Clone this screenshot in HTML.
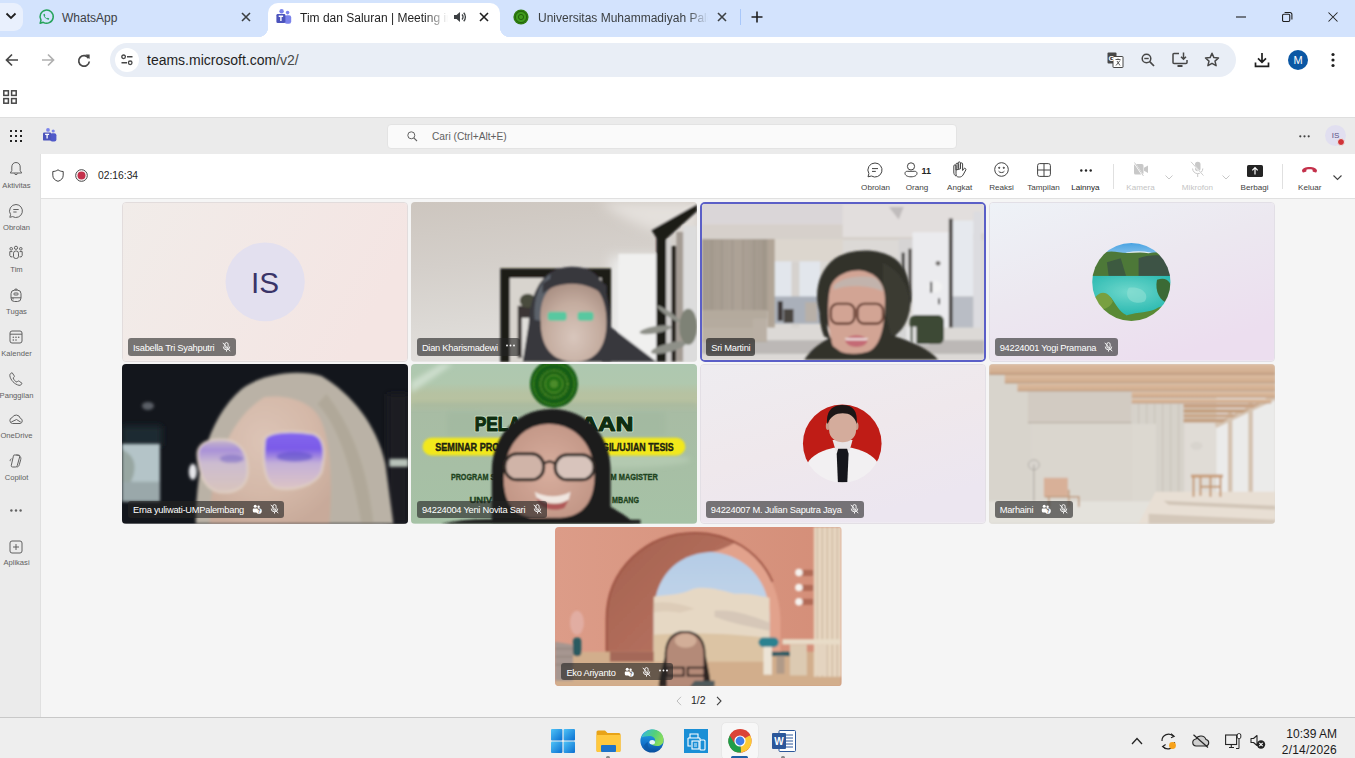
<!DOCTYPE html>
<html><head><meta charset="utf-8">
<style>
*{box-sizing:border-box;margin:0;padding:0}
html,body{width:1355px;height:758px;overflow:hidden;background:#fff;font-family:"Liberation Sans",sans-serif;position:relative}
.abs{position:absolute}
svg{position:absolute;overflow:visible}
#tabstrip{left:0;top:0;width:1355px;height:37px;background:#d3e3fd}
#toolbar{left:0;top:37px;width:1355px;height:44px;background:#fff;border-top-right-radius:9px}
#bookmarks{left:0;top:81px;width:1355px;height:36px;background:#fff}
#teamshdr{left:0;top:117px;width:1355px;height:37px;background:#ebebeb;border-top:1px solid #dedede}
#rail{left:0;top:154px;width:41px;height:563px;background:#ebebeb;border-right:1px solid #e0e0e0}
#mhdr{left:41px;top:154px;width:1314px;height:45px;background:#fff;border-bottom:1px solid #e0e0e0}
#stage{left:41px;top:199px;width:1314px;height:518px;background:#f5f5f5}
#taskbar{left:0;top:717px;width:1355px;height:41px;background:#eeeeee;border-top:1px solid #c8c8c8}
.tabtxt{font-size:13px;color:#1f1f1f;white-space:nowrap}
.rl{font-size:7.6px;color:#616161;text-align:center;width:41px;left:0}
.tl{font-size:8.1px;color:#424242;text-align:center;width:60px}
.tile{position:absolute;width:286.3px;height:159.7px;border-radius:4px;overflow:hidden}
.lbl{position:absolute;left:5px;bottom:5px;height:17.5px;border-radius:3px;color:#fff;font-size:9.3px;letter-spacing:-.25px;line-height:18px;padding:0 5px;white-space:nowrap;display:flex;align-items:center}
.lbl .ic{margin-left:8px;display:inline-flex;align-items:center}
.lbl .mi{position:static}
.lbl .lt{position:relative;top:.8px}
</style></head><body>
<div id="tabstrip" class="abs">
 <div class="abs" style="left:-10px;top:3px;width:33px;height:28px;border-radius:9px;background:#e9f0fd"></div>
 <svg style="left:5px;top:12px" width="12" height="8" viewBox="0 0 12 8"><path d="M1.5 1.5 L6 6 L10.5 1.5" fill="none" stroke="#1f1f1f" stroke-width="1.8"/></svg>
 <svg style="left:38px;top:9px" width="16" height="16" viewBox="0 0 16 16"><path d="M2.2 14.2 L3 11.1 A6.6 6.6 0 1 1 5.2 13.3 Z" fill="none" stroke="#25a35a" stroke-width="1.5" stroke-linejoin="round"/><path d="M5.6 4.9 C5.3 5.6 5.6 7.4 7.3 9 C8.9 10.5 10.3 10.9 11 10.6 L11.2 9.6 L9.7 8.8 L9 9.5 C8.2 9.1 7 8 6.6 7.1 L7.3 6.4 L6.6 4.8 Z" fill="#25a35a"/></svg>
 <div class="abs tabtxt" style="left:62px;top:11px;font-size:12px;color:#3c4043">WhatsApp</div>
 <svg style="left:241px;top:12px" width="10" height="10" viewBox="0 0 10 10"><path d="M1 1 L9 9 M9 1 L1 9" stroke="#3c4043" stroke-width="1.6"/></svg>
 <div class="abs" style="left:268px;top:3px;width:232px;height:34px;background:#fff;border-radius:10px 10px 0 0"></div>
 <div class="abs" style="left:258px;top:27px;width:10px;height:10px;background:radial-gradient(circle at 0 0,#d3e3fd 10px,#fff 10.5px)"></div>
 <div class="abs" style="left:500px;top:27px;width:10px;height:10px;background:radial-gradient(circle at 100% 0,#d3e3fd 10px,#fff 10.5px)"></div>
 <svg style="left:276px;top:9px" width="16" height="16" viewBox="0 0 16 16"><circle cx="5.6" cy="2.3" r="2.2" fill="#7b83eb"/><circle cx="11.6" cy="3.6" r="1.8" fill="#7b83eb"/><rect x="8.6" y="6.2" width="6.6" height="8.6" rx="2.2" fill="#7b83eb"/><rect x="0.4" y="5" width="9" height="9" rx="1.3" fill="#4b53bc"/><path d="M2.7 7.2 H7.1 M4.9 7.2 V12" stroke="#fff" stroke-width="1.4"/></svg>
 <div class="abs tabtxt" style="left:300px;top:11px;font-size:12px;width:148px;overflow:hidden;-webkit-mask-image:linear-gradient(90deg,#000 125px,transparent 148px)">Tim dan Saluran | Meeting in Tim</div>
 <svg style="left:453px;top:10px" width="14" height="14" viewBox="0 0 14 14"><path d="M1 5 H3.5 L7 2 V12 L3.5 9 H1 Z" fill="#3c4043"/><path d="M9 4.5 A3.5 3.5 0 0 1 9 9.5 M10.7 2.8 A6 6 0 0 1 10.7 11.2" fill="none" stroke="#3c4043" stroke-width="1.3"/></svg>
 <svg style="left:479px;top:12px" width="10" height="10" viewBox="0 0 10 10"><path d="M1 1 L9 9 M9 1 L1 9" stroke="#1f1f1f" stroke-width="1.6"/></svg>
 <svg style="left:513px;top:9px" width="16" height="16" viewBox="0 0 16 16"><circle cx="8" cy="8" r="7.6" fill="#2f7d12"/><circle cx="8" cy="8" r="5.6" fill="#3f9a1c" stroke="#1f5c08" stroke-width="0.8"/><circle cx="8" cy="8" r="2.6" fill="none" stroke="#1f5c08" stroke-width="0.9"/></svg>
 <div class="abs tabtxt" style="left:538px;top:11px;font-size:12px;color:#3c4043;width:170px;overflow:hidden;-webkit-mask-image:linear-gradient(90deg,#000 150px,transparent 170px)">Universitas Muhammadiyah Palembang</div>
 <svg style="left:717px;top:12px" width="10" height="10" viewBox="0 0 10 10"><path d="M1 1 L9 9 M9 1 L1 9" stroke="#3c4043" stroke-width="1.6"/></svg>
 <div class="abs" style="left:740px;top:9px;width:1px;height:16px;background:#a8c7fa"></div>
 <svg style="left:751px;top:11px" width="12" height="12" viewBox="0 0 12 12"><path d="M6 0.5 V11.5 M0.5 6 H11.5" stroke="#1f1f1f" stroke-width="1.6"/></svg>
 <svg style="left:1236px;top:16px" width="10" height="2" viewBox="0 0 10 2"><path d="M0 1 H10" stroke="#1f1f1f" stroke-width="1.1"/></svg>
 <svg style="left:1282px;top:12px" width="10.5" height="10" viewBox="0 0 10.5 10"><rect x="0.55" y="2.3" width="7.2" height="7.2" rx="1.2" fill="none" stroke="#1f1f1f" stroke-width="1.1"/><path d="M2.6 0.55 H8 A1.8 1.8 0 0 1 9.9 2.4 V7.6" fill="none" stroke="#1f1f1f" stroke-width="1.1"/></svg>
 <svg style="left:1328px;top:12px" width="10" height="10" viewBox="0 0 10 10"><path d="M0.5 0.5 L9.5 9.5 M9.5 0.5 L0.5 9.5" stroke="#1f1f1f" stroke-width="1.05"/></svg>
</div>
<div id="toolbar" class="abs">
 <svg style="left:5px;top:16px" width="14" height="14" viewBox="0 0 14 14"><path d="M13 7 H1.5 M7 1.5 L1.5 7 L7 12.5" fill="none" stroke="#474747" stroke-width="1.7"/></svg>
 <svg style="left:41px;top:16px" width="14" height="14" viewBox="0 0 14 14"><path d="M1 7 H12.5 M7 1.5 L12.5 7 L7 12.5" fill="none" stroke="#b0b0b0" stroke-width="1.7"/></svg>
 <svg style="left:77px;top:16px" width="14" height="14" viewBox="0 0 14 14"><path d="M11.6 5.2 A5.3 5.3 0 1 0 12.3 8.5" fill="none" stroke="#474747" stroke-width="1.7"/><path d="M8.3 1.6 L12.6 1.6 L12.6 5.9 Z" fill="#474747"/></svg>
 <div class="abs" style="left:110px;top:6px;width:1126px;height:34px;border-radius:17px;background:#e9eef6"></div>
 <div class="abs" style="left:115px;top:11px;width:24px;height:24px;border-radius:12px;background:#fff"></div>
 <svg style="left:121px;top:17px" width="12" height="12" viewBox="0 0 12 12"><circle cx="2.6" cy="2.8" r="1.8" fill="none" stroke="#474747" stroke-width="1.3"/><path d="M6 2.8 H11.5 M0.5 8.8 H6" stroke="#474747" stroke-width="1.4"/><circle cx="9.2" cy="8.8" r="1.8" fill="none" stroke="#474747" stroke-width="1.3"/></svg>
 <div class="abs" style="left:147px;top:15px;font-size:14px;color:#1f1f1f;white-space:nowrap">teams.microsoft.com<span style="color:#474747">/v2/</span></div>
 <svg style="left:1107px;top:15px" width="17" height="16" viewBox="0 0 17 16"><rect x="0.5" y="0.5" width="9" height="11" rx="1" fill="#474747"/><rect x="6" y="4.5" width="10" height="11" rx="0.5" fill="#fff" stroke="#474747" stroke-width="1"/><text x="1.5" y="9" font-size="7.5" font-family="Liberation Sans" font-weight="bold" fill="#fff">G</text><path d="M8.5 7.5 H13.5 M11 6.5 V7.5 M9 13.5 L13 8.5 M10 9 L13 13.5" stroke="#474747" stroke-width="0.9" fill="none"/></svg>
 <svg style="left:1141px;top:16px" width="14" height="14" viewBox="0 0 14 14"><circle cx="5.5" cy="5.5" r="4.3" fill="none" stroke="#474747" stroke-width="1.5"/><path d="M3.3 5.5 H7.7" stroke="#474747" stroke-width="1.4"/><path d="M8.7 8.7 L13 13" stroke="#474747" stroke-width="1.7"/></svg>
 <svg style="left:1172px;top:15px" width="17" height="16" viewBox="0 0 17 16"><path d="M7 1.5 H2 A1 1 0 0 0 1 2.5 V10.5 A1 1 0 0 0 2 11.5 H14 A1 1 0 0 0 15 10.5 V8" fill="none" stroke="#474747" stroke-width="1.5"/><path d="M5.5 14 H10.5" stroke="#474747" stroke-width="2"/><path d="M11.5 0.5 V7 M9 4.7 L11.5 7.2 L14 4.7" fill="none" stroke="#474747" stroke-width="1.5"/></svg>
 <svg style="left:1204px;top:15px" width="16" height="16" viewBox="0 0 16 16"><path d="M8 1.3 L9.9 5.6 L14.5 6 L11 9.1 L12.1 13.7 L8 11.3 L3.9 13.7 L5 9.1 L1.5 6 L6.1 5.6 Z" fill="none" stroke="#474747" stroke-width="1.5" stroke-linejoin="round"/></svg>
 <svg style="left:1254px;top:15px" width="16" height="16" viewBox="0 0 16 16"><path d="M8 1 V10 M4 6.3 L8 10.3 L12 6.3" fill="none" stroke="#1f1f1f" stroke-width="1.7"/><path d="M1.5 10.5 V14.3 H14.5 V10.5" fill="none" stroke="#1f1f1f" stroke-width="1.7"/></svg>
 <div class="abs" style="left:1288px;top:13px;width:20px;height:20px;border-radius:10px;background:#0b57a4;color:#fff;font-size:11px;line-height:20px;text-align:center">M</div>
 <svg style="left:1331px;top:15px" width="4" height="16" viewBox="0 0 4 16"><circle cx="2" cy="2.5" r="1.6" fill="#1f1f1f"/><circle cx="2" cy="8" r="1.6" fill="#1f1f1f"/><circle cx="2" cy="13.5" r="1.6" fill="#1f1f1f"/></svg>
</div>
<div id="bookmarks" class="abs">
 <svg style="left:3px;top:9px" width="14" height="14" viewBox="0 0 14 14"><rect x="0.8" y="0.8" width="4.6" height="4.6" fill="none" stroke="#474747" stroke-width="1.5"/><rect x="8.6" y="0.8" width="4.6" height="4.6" fill="none" stroke="#474747" stroke-width="1.5"/><rect x="0.8" y="8.6" width="4.6" height="4.6" fill="none" stroke="#474747" stroke-width="1.5"/><rect x="8.6" y="8.6" width="4.6" height="4.6" fill="none" stroke="#474747" stroke-width="1.5"/></svg>
</div>
<div id="teamshdr" class="abs">
 <svg style="left:10px;top:12px" width="12" height="12" viewBox="0 0 12 12" fill="#242424"><rect x="0" y="0" width="2" height="2"/><rect x="5" y="0" width="2" height="2"/><rect x="10" y="0" width="2" height="2"/><rect x="0" y="5" width="2" height="2"/><rect x="5" y="5" width="2" height="2"/><rect x="10" y="5" width="2" height="2"/><rect x="0" y="10" width="2" height="2"/><rect x="5" y="10" width="2" height="2"/><rect x="10" y="10" width="2" height="2"/></svg>
 <svg style="left:43px;top:10px" width="14" height="14" viewBox="0 0 14 14"><circle cx="5" cy="1.9" r="1.9" fill="#7b83eb"/><circle cx="10.2" cy="3" r="1.6" fill="#7b83eb"/><rect x="7.2" y="5.2" width="6.2" height="8.2" rx="2" fill="#5059c9"/><rect x="0" y="4.4" width="8.2" height="8.2" rx="1.2" fill="#4b53bc"/><path d="M2.1 6.4 H6.1 M4.1 6.4 V10.6" stroke="#fff" stroke-width="1.3"/></svg>
 <div class="abs" style="left:387px;top:6px;width:570px;height:25px;border-radius:4px;background:#fafafa;border:1px solid #e3e3e3"></div>
 <svg style="left:407px;top:13px" width="11" height="11" viewBox="0 0 11 11"><circle cx="4.3" cy="4.3" r="3.5" fill="none" stroke="#616161" stroke-width="1"/><path d="M6.8 6.8 L10 10" stroke="#616161" stroke-width="1.1"/></svg>
 <div class="abs" style="left:432px;top:13px;font-size:10.2px;color:#616161;white-space:nowrap">Cari (Ctrl+Alt+E)</div>
 <svg style="left:1299px;top:17px" width="11" height="3" viewBox="0 0 11 3" fill="#424242"><circle cx="1.3" cy="1.3" r="1.1"/><circle cx="5.5" cy="1.3" r="1.1"/><circle cx="9.7" cy="1.3" r="1.1"/></svg>
 <div class="abs" style="left:1325px;top:7px;width:21px;height:21px;border-radius:11px;background:#e1dff0;color:#5b5287;font-size:8px;line-height:21px;text-align:center">IS</div>
 <div class="abs" style="left:1337px;top:20px;width:8px;height:8px;border-radius:4px;background:#d13438;border:1px solid #ebebeb"></div>
</div>
<div id="rail" class="abs">
 <svg style="left:8px;top:7px" width="16" height="16" viewBox="0 0 16 16" fill="none" stroke="#616161" stroke-width="1"><path d="M8 1.5 C5.2 1.5 3.8 3.6 3.8 6 V9.6 L2.3 12 H13.7 L12.2 9.6 V6 C12.2 3.6 10.8 1.5 8 1.5 Z" stroke-linejoin="round"/><path d="M6.3 12.4 A1.8 1.8 0 0 0 9.7 12.4"/></svg>
 <div class="abs rl" style="left:-4px;top:27px">Aktivitas</div>
 <svg style="left:8px;top:49px" width="16" height="16" viewBox="0 0 16 16" fill="none" stroke="#616161" stroke-width="1"><path d="M8 1.5 A6.5 6.5 0 1 1 4.6 13.6 L1.8 14.3 L2.6 11.6 A6.5 6.5 0 0 1 8 1.5 Z" stroke-linejoin="round"/><path d="M5.3 6.5 H10.7 M5.3 9 H8.6"/></svg>
 <div class="abs rl" style="left:-4px;top:69px">Obrolan</div>
 <svg style="left:8px;top:91px" width="16" height="16" viewBox="0 0 16 16" fill="none" stroke="#616161" stroke-width="1"><circle cx="8" cy="2.8" r="1.6"/><circle cx="3.2" cy="3.8" r="1.3"/><circle cx="12.8" cy="3.8" r="1.3"/><rect x="5.5" y="6" width="5" height="7.5" rx="2.2"/><path d="M4.4 6.6 H1.8 V10.5 A2 2 0 0 0 4.5 11.8 M11.6 6.6 H14.2 V10.5 A2 2 0 0 1 11.5 11.8"/></svg>
 <div class="abs rl" style="left:-4px;top:111px">Tim</div>
 <svg style="left:8px;top:133px" width="16" height="16" viewBox="0 0 16 16" fill="none" stroke="#616161" stroke-width="1"><path d="M6.3 3.2 A1.8 1.8 0 0 1 9.7 3.2"/><rect x="3" y="3.2" width="10" height="11.3" rx="3.5"/><rect x="5.8" y="6" width="4.4" height="2" rx="1"/><path d="M3 10.8 H13 M5 10.8 V12.5"/></svg>
 <div class="abs rl" style="left:-4px;top:153px">Tugas</div>
 <svg style="left:8px;top:175px" width="16" height="16" viewBox="0 0 16 16" fill="none" stroke="#616161" stroke-width="1"><rect x="2" y="2" width="12" height="12" rx="2"/><path d="M2 5.2 H14"/><g fill="#616161" stroke="none"><circle cx="5.3" cy="8.3" r=".8"/><circle cx="8" cy="8.3" r=".8"/><circle cx="10.7" cy="8.3" r=".8"/><circle cx="5.3" cy="11" r=".8"/><circle cx="8" cy="11" r=".8"/></g></svg>
 <div class="abs rl" style="left:-4px;top:195px">Kalender</div>
 <svg style="left:8px;top:217px" width="16" height="16" viewBox="0 0 16 16" fill="none" stroke="#616161" stroke-width="1"><path d="M4.2 1.8 L6.2 4.8 C6.6 5.4 6.3 6.1 5.7 6.5 L5.1 6.9 C5.7 8.8 7.3 10.6 9 11.1 L9.6 10.4 C10 9.9 10.7 9.8 11.2 10.2 L14 12.3 C13.6 13.6 12.4 14.6 11 14.3 C6.6 13.4 2.4 8.9 1.8 4.6 C1.6 3.3 2.7 2 4.2 1.8 Z" stroke-linejoin="round"/></svg>
 <div class="abs rl" style="left:-4px;top:237px">Panggilan</div>
 <svg style="left:8px;top:257px" width="16" height="16" viewBox="0 0 16 16" fill="none" stroke="#616161" stroke-width="1"><path d="M4.5 12.5 A3 3 0 0 1 4.2 6.6 A4.3 4.3 0 0 1 12.3 7.3 A2.7 2.7 0 0 1 12.3 12.5 Z" stroke-linejoin="round"/><path d="M3.3 11 L8.5 8.5 L12.8 11.2"/></svg>
 <div class="abs rl" style="left:-4px;top:277px">OneDrive</div>
 <svg style="left:8px;top:299px" width="16" height="16" viewBox="0 0 16 16" fill="none" stroke="#616161" stroke-width="1"><path d="M6 2 H10.4 C11.6 2 12 2.8 11.7 3.8 L9.3 12.4 C9 13.4 8.4 14 7.4 14 H4.6 C3.6 14 3 13.4 3.3 12.3 L5.2 4 C5.4 2.8 5.6 2 6 2 Z" stroke-linejoin="round"/><path d="M8.3 2 C10.5 2.4 13.6 3 12.7 6.7 L11.3 11.7 C11 12.9 10.2 14 8.6 14"/><path d="M3.5 5.8 C2.2 6.2 2 7.2 2.3 8.2"/></svg>
 <div class="abs rl" style="left:-4px;top:319px">Copilot</div>
 <svg style="left:10px;top:355px" width="12" height="3" viewBox="0 0 12 3" fill="#616161"><circle cx="1.4" cy="1.5" r="1.2"/><circle cx="6" cy="1.5" r="1.2"/><circle cx="10.6" cy="1.5" r="1.2"/></svg>
 <svg style="left:8px;top:385px" width="16" height="16" viewBox="0 0 16 16" fill="none" stroke="#616161" stroke-width="1"><rect x="2" y="2" width="12" height="12" rx="2"/><path d="M8 5 V11 M5 8 H11"/></svg>
 <div class="abs rl" style="left:-4px;top:404px">Aplikasi</div>
</div>
<div id="mhdr" class="abs">
 <svg style="left:11px;top:15px" width="12" height="13" viewBox="0 0 12 13"><path d="M6 0.8 C4.3 2 2.6 2.5 0.8 2.5 V6.2 C0.8 9.3 2.7 11.3 6 12.3 C9.3 11.3 11.2 9.3 11.2 6.2 V2.5 C9.4 2.5 7.7 2 6 0.8 Z" fill="none" stroke="#424242" stroke-width="1" stroke-linejoin="round"/></svg>
 <svg style="left:34px;top:15px" width="13" height="13" viewBox="0 0 13 13"><circle cx="6.5" cy="6.5" r="5.8" fill="none" stroke="#424242" stroke-width="1"/><circle cx="6.5" cy="6.5" r="4" fill="#c4314b"/></svg>
 <div class="abs" style="left:57px;top:16px;font-size:10.3px;color:#242424;white-space:nowrap">02:16:34</div>
 <svg style="left:826px;top:8px" width="16" height="16" viewBox="0 0 16 16" fill="none" stroke="#424242" stroke-width="1"><path d="M8 1 A7 7 0 1 1 4.4 14 L1 14.8 L1.9 11.6 A7 7 0 0 1 8 1 Z" stroke-linejoin="round"/><path d="M5 6.6 H11 M5 9.4 H8.8"/></svg>
 <div class="abs tl" style="top:29px;left:804.5px;color:#424242">Obrolan</div>
 <svg style="left:863px;top:8px" width="14" height="16" viewBox="0 0 14 16" fill="none" stroke="#424242" stroke-width="1"><circle cx="7" cy="4.4" r="3.6"/><path d="M1 11.3 C1 10 2 9.3 3.2 9.3 H10.8 C12 9.3 13 10 13 11.3 C13 13.5 10.5 14.8 7 14.8 C3.5 14.8 1 13.5 1 11.3 Z"/></svg>
 <div class="abs" style="left:880.5px;top:12px;font-size:9px;font-weight:bold;color:#242424">11</div>
 <div class="abs tl" style="top:29px;left:846px;color:#424242">Orang</div>
 <svg style="left:911px;top:7px" width="15" height="17" viewBox="0 0 15 17" fill="none" stroke="#424242" stroke-width="1" stroke-linejoin="round"><path d="M4 9 V3.3 A1.1 1.1 0 0 1 6.2 3.3 V8 M6.2 7.5 V2 A1.1 1.1 0 0 1 8.4 2 V7.5 M8.4 7.8 V3 A1.1 1.1 0 0 1 10.6 3 V9.5 L11.9 7.6 A1.2 1.2 0 0 1 13.8 9 L11 14 C10.1 15.4 9 16 7.4 16 H6.8 C4.9 16 4 14.9 4 12.8 V9 Z"/><path d="M4 9 V5 A1.1 1.1 0 0 0 1.8 5 V11 C1.8 13 2.6 14.5 4 15"/></svg>
 <div class="abs tl" style="top:29px;left:888.6px;color:#424242">Angkat</div>
 <svg style="left:953px;top:8px" width="15" height="15" viewBox="0 0 15 15" fill="none" stroke="#424242" stroke-width="1"><circle cx="7.5" cy="7.5" r="6.8"/><circle cx="5.2" cy="5.8" r=".6" fill="#424242"/><circle cx="9.8" cy="5.8" r=".6" fill="#424242"/><path d="M4.6 9.2 C5.6 11 9.4 11 10.4 9.2"/></svg>
 <div class="abs tl" style="top:29px;left:930.5px;color:#424242">Reaksi</div>
 <svg style="left:995.5px;top:9px" width="14" height="14" viewBox="0 0 14 14" fill="none" stroke="#424242" stroke-width="1" stroke-width="1.1"><rect x="0.6" y="0.6" width="12.8" height="12.8" rx="2"/><path d="M7 0.6 V13.4 M0.6 7 H13.4"/></svg>
 <div class="abs tl" style="top:29px;left:972.5px;color:#424242">Tampilan</div>
 <svg style="left:1038.5px;top:15px" width="12" height="3" viewBox="0 0 12 3" fill="#242424"><circle cx="1.3" cy="1.5" r="1.2"/><circle cx="6" cy="1.5" r="1.2"/><circle cx="10.7" cy="1.5" r="1.2"/></svg>
 <div class="abs tl" style="top:29px;left:1014.4000000000001px;color:#242424">Lainnya</div>
 <div class="abs" style="left:1072px;top:10px;width:1px;height:25px;background:#e0e0e0"></div>
 <svg style="left:1091.5px;top:8px" width="16" height="15" viewBox="0 0 16 15"><path d="M1 3.5 A1.5 1.5 0 0 1 2.5 2 H9 A1.5 1.5 0 0 1 10.5 3.5 V11 A1.5 1.5 0 0 1 9 12.5 H2.5 A1.5 1.5 0 0 1 1 11 Z" fill="#c8c8c8"/><path d="M11 5.8 L15 3.5 V11 L11 8.7 Z" fill="#c8c8c8"/><path d="M1.2 0.5 L10.5 14.5" stroke="#fff" stroke-width="1.5"/><path d="M1.5 0.5 L10.5 14" stroke="#c8c8c8" stroke-width=".9"/></svg>
 <div class="abs tl" style="top:29px;left:1069.5px;color:#c4c4c4">Kamera</div>
 <svg style="left:1123.5px;top:21px" width="8" height="5" viewBox="0 0 8 5"><path d="M0.5 0.5 L4 4 L7.5 0.5" fill="none" stroke="#c8c8c8" stroke-width="1"/></svg>
 <svg style="left:1149px;top:7px" width="15" height="17" viewBox="0 0 15 17"><rect x="5" y="0.8" width="5.5" height="9.5" rx="2.7" fill="#c8c8c8"/><path d="M2.6 7.5 A5.1 5.1 0 0 0 12.8 7.5 M7.7 12.8 V16" fill="none" stroke="#c8c8c8" stroke-width="1"/><path d="M0.8 0.8 L13.5 15" stroke="#fff" stroke-width="1.5"/><path d="M1 0.8 L13.5 14.6" stroke="#c8c8c8" stroke-width=".9"/></svg>
 <div class="abs tl" style="top:29px;left:1126.4px;color:#c4c4c4">Mikrofon</div>
 <svg style="left:1180.5px;top:21px" width="8" height="5" viewBox="0 0 8 5"><path d="M0.5 0.5 L4 4 L7.5 0.5" fill="none" stroke="#c8c8c8" stroke-width="1"/></svg>
 <svg style="left:1205.5px;top:11px" width="16" height="12" viewBox="0 0 16 12"><rect x="0" y="0" width="16" height="12" rx="1.6" fill="#242424"/><path d="M8 9.5 V2.8 M5.3 5.3 L8 2.6 L10.7 5.3" fill="none" stroke="#fff" stroke-width="1.2"/></svg>
 <div class="abs tl" style="top:29px;left:1183.5px;color:#424242">Berbagi</div>
 <div class="abs" style="left:1241px;top:10px;width:1px;height:25px;background:#e0e0e0"></div>
 <svg style="left:1260px;top:12px" width="17" height="7" viewBox="0 0 17 7"><path d="M1 4.6 C1.2 2.6 4.5 1 8.5 1 C12.5 1 15.8 2.6 16 4.6 L15.6 6 C15.4 6.4 15 6.5 14.6 6.4 L12.2 5.7 C11.8 5.6 11.6 5.3 11.6 4.9 V3.8 C10.6 3.4 9.6 3.3 8.5 3.3 C7.4 3.3 6.4 3.4 5.4 3.8 V4.9 C5.4 5.3 5.2 5.6 4.8 5.7 L2.4 6.4 C2 6.5 1.6 6.4 1.4 6 Z" fill="#c4314b"/></svg>
 <div class="abs tl" style="top:29px;left:1238.8px;color:#424242">Keluar</div>
 <svg style="left:1292px;top:21px" width="9" height="6" viewBox="0 0 9 6"><path d="M0.5 0.5 L4.5 4.5 L8.5 0.5" fill="none" stroke="#424242" stroke-width="1.1"/></svg>
</div>
<div id="stage" class="abs">
<div class="tile" style="left:81px;top:3px;border:1px solid #e2dcdc"><svg width="287" height="160" viewBox="0 0 287 160" preserveAspectRatio="none" style="left:0;top:0;width:100%;height:100%"><defs><linearGradient id="g1" x1="0" y1="0" x2="1" y2="0.3"><stop offset="0" stop-color="#f1ece9"/><stop offset="1" stop-color="#f4e5e3"/></linearGradient></defs>
<rect width="287" height="160" fill="url(#g1)"/>
<circle cx="143.5" cy="80" r="40" fill="#e3e0ef"/>
<text x="143.5" y="91" text-anchor="middle" font-family="Liberation Sans" font-size="30" fill="#3a3468">IS</text></svg><div class="lbl" style="left:5px;bottom:5px;background:rgba(36,36,36,.6);"><span class="lt">Isabella Tri Syahputri</span><span class="ic"><svg class="mi" width="9" height="10" viewBox="0 0 9 10"><rect x="2.9" y="0.6" width="3.2" height="5.6" rx="1.6" fill="none" stroke="#fff" stroke-width=".9"/><path d="M1.3 4.6 A3.2 3.2 0 0 0 7.7 4.6 M4.5 7.8 V9.6" fill="none" stroke="#fff" stroke-width=".9"/><path d="M0.8 0.8 L8.2 9.2" stroke="#fff" stroke-width=".9"/></svg></span></div></div>
<div class="tile" style="left:369.9px;top:3px;"><svg width="287" height="160" viewBox="0 0 287 160" preserveAspectRatio="none" style="left:0;top:0;width:100%;height:100%"><defs><filter id="b2" x="-20%" y="-20%" width="140%" height="140%"><feGaussianBlur stdDeviation="1.1"/></filter><filter id="b2s" x="-30%" y="-30%" width="160%" height="160%"><feGaussianBlur stdDeviation="6"/></filter>
<linearGradient id="w2" x1="0" y1="0" x2="0.2" y2="1"><stop offset="0" stop-color="#cdc6bf"/><stop offset=".4" stop-color="#d4cfca"/><stop offset=".75" stop-color="#dcd9d5"/><stop offset="1" stop-color="#e2e0dd"/></linearGradient>
<radialGradient id="fc2" cx=".5" cy=".7" r=".7"><stop offset="0" stop-color="#d8c6bc"/><stop offset=".6" stop-color="#c4ac9f"/><stop offset="1" stop-color="#a88e82"/></radialGradient></defs>
<rect width="287" height="160" fill="url(#w2)"/>
<g filter="url(#b2s)">
<path d="M190 0 H287 V30 L240 28 C220 20 200 10 190 0 Z" fill="#e4e0dc"/>
<rect x="200" y="55" width="50" height="100" fill="#ebebea"/>
</g>
<g filter="url(#b2)">
<path d="M241 27 L287 0 V6 L248 32 Z" fill="#ece8e4"/>
<rect x="208" y="52" width="38" height="108" fill="#f0f0ef"/>
<path d="M241 28 L287 2 V9 L256 37 V160 H246 V36 Z" fill="#1c1a19"/>
<rect x="256" y="38" width="5" height="122" fill="#d4d2d0"/>
<rect x="261" y="44" width="5" height="116" fill="#2a2624"/>
<rect x="266" y="30" width="7" height="130" fill="#a49c94"/>
<rect x="273" y="24" width="14" height="136" fill="#dcdcdc"/>
<rect x="89.5" y="66.5" width="111" height="94" fill="#1e1a18"/>
<rect x="99" y="76" width="92" height="85" fill="#d8d4ce"/>
<rect x="107" y="104" width="14" height="52" fill="#3a3634"/>
<rect x="111" y="116" width="12" height="40" fill="#e0deda"/>
<ellipse cx="117" cy="99" rx="8" ry="7" fill="#4a4c3c"/>
<g fill="#8e9088"><ellipse cx="245" cy="128" rx="16" ry="3.5" transform="rotate(-10 245 128)"/><ellipse cx="258" cy="146" rx="18" ry="4.5" transform="rotate(-15 258 146)"/><ellipse cx="258" cy="112" rx="14" ry="2.5" transform="rotate(35 258 112)"/><ellipse cx="278" cy="125" rx="9" ry="18" fill="#7e8276"/></g>
<path d="M112 160 L118 122 C120 92 130 66 160 65 C186 64 196 80 199 110 L200 125 L246 160 Z" fill="#38383e"/>
<path d="M124 118 C122 100 128 80 140 72 L134 120 Z" fill="#5c626a"/>
<path d="M130 120 C128 92 142 78 163 78 C185 78 196 94 196 120 C196 145 186 160 164 160 C142 160 130 146 130 120 Z" fill="url(#fc2)"/>
<rect x="137" y="110" width="19" height="9" rx="3" fill="#58c8a0"/>
<rect x="167" y="110" width="16" height="9" rx="3" fill="#58c8a0"/>
<path d="M132 92 C146 78 180 78 196 96 L196 84 C184 70 148 68 132 82 Z" fill="#38383e"/>
</g></svg><div class="lbl" style="left:6px;bottom:6px;background:rgba(36,36,36,.62);"><span class="lt">Dian Kharismadewi</span><span class="ic"><svg class="mi" width="9" height="3" viewBox="0 0 9 3" style="margin-bottom:3px"><circle cx="1" cy="1.5" r=".9" fill="#fff"/><circle cx="4.5" cy="1.5" r=".9" fill="#fff"/><circle cx="8" cy="1.5" r=".9" fill="#fff"/></svg></span></div></div>
<div class="tile" style="left:658.8px;top:3px;border:2px solid #5b5fc7;box-shadow:inset 0 0 0 1px #fff;border-radius:5px"><svg width="287" height="160" viewBox="0 0 287 160" preserveAspectRatio="none" style="left:0;top:0;width:100%;height:100%"><defs><filter id="b3" x="-20%" y="-20%" width="140%" height="140%"><feGaussianBlur stdDeviation="1"/></filter><filter id="b3s" x="-20%" y="-20%" width="140%" height="140%"><feGaussianBlur stdDeviation="2.5"/></filter>
<linearGradient id="wd3" x1="0" y1="0" x2="1" y2="0"><stop offset="0" stop-color="#a49a8e"/><stop offset=".5" stop-color="#ada397"/><stop offset="1" stop-color="#a0968a"/></linearGradient></defs>
<rect width="287" height="160" fill="#dcd9d6"/>
<g filter="url(#b3)">
<rect x="0" y="0" width="287" height="21" fill="#dad6d8"/>
<rect x="0" y="21" width="287" height="16" fill="#d6d0cb"/>
<path d="M143 0 H287 V30 L214 34 H143 Z" fill="#e2dedd"/>
<path d="M190 3 L205 3 L200 16 Z" fill="#c0bcbc"/>
<rect x="0" y="36" width="73" height="74" fill="url(#wd3)"/>
<g stroke="#968c80" stroke-width="1.2" opacity=".6"><path d="M10 37 V110 M20 37 V110 M31 37 V110 M42 37 V110 M53 37 V110 M63 37 V110"/></g>
<rect x="73" y="36" width="70" height="23" fill="#dcd6ce"/>
<rect x="73" y="59" width="47" height="37" fill="#e2e6ec"/>
<rect x="91" y="59" width="8" height="70" fill="#d6d2ce"/>
<rect x="73" y="95" width="50" height="28" fill="#aab0ba"/>
<rect x="77" y="100" width="5" height="20" fill="#3a3634"/><rect x="83" y="108" width="10" height="14" fill="#4a4440"/>
<rect x="105" y="101" width="12" height="20" fill="#b8b0a8"/>
<rect x="66.5" y="36" width="7.5" height="94" fill="#b0a496"/>
<rect x="0" y="109" width="66" height="33" fill="#b5ab9e"/>
<rect x="0" y="109" width="66" height="9" fill="#a89e90"/>
<rect x="52" y="118" width="14" height="22" fill="#e6e2dc"/>
<rect x="200" y="36" width="16" height="60" fill="#d6d4d4"/>
<rect x="203" y="50" width="3" height="50" fill="#3e3a38"/><rect x="210" y="46" width="3" height="55" fill="#3e3a38"/>
<rect x="214" y="29" width="37" height="110" fill="#ebebee"/>
<circle cx="240" cy="61" r="2.5" fill="#6e6a68"/>
<ellipse cx="237" cy="85" rx="7" ry="6" fill="#f2f2f2"/><rect x="232" y="80" width="2" height="11" fill="#3a3a3a"/>
<rect x="240" y="97" width="2" height="6" fill="#3a3a3a"/>
<rect x="251" y="15" width="4" height="125" fill="#4a4644"/>
<rect x="255" y="17" width="21" height="78" fill="#e6e9ee"/>
<rect x="255" y="95" width="21" height="45" fill="#b9bdc5"/>
<rect x="276" y="8" width="8" height="135" fill="#dcdce0"/>
<rect x="0" y="127" width="287" height="33" fill="#dcd9d6"/>
<rect x="0" y="140" width="287" height="14" fill="#aeaaa8" opacity=".7"/>
<rect x="52" y="118" width="14" height="22" fill="#e6e2dc"/>
<rect x="0" y="109" width="66" height="33" fill="#b5ab9e" opacity=".9"/>
<rect x="195" y="126" width="36" height="19" fill="#d6d6d6"/>
<rect x="211" y="114" width="35" height="30" rx="6" fill="#3c4836"/>
<rect x="208" y="126" width="4" height="18" fill="#e8e8e8"/><rect x="214" y="126" width="4" height="18" fill="#e0e0e0"/>
</g>
<g filter="url(#b3)">
<path d="M104 160 C112 148 124 140 134 136 L120 112 C114 96 116 70 135 56 C150 46 178 44 196 56 C210 66 214 90 212 104 C210 118 204 128 196 136 C215 142 232 150 240 160 Z" fill="#30302a"/>
<path d="M184 60 C205 70 214 92 211 110 C208 126 200 134 192 136 L184 100 Z" fill="#3a3a32"/>
<path d="M133 146 C127 128 127 96 131 84 C136 72 150 68 160 68 C176 70 186 80 186 98 C186 118 184 142 172 150 C164 155 146 155 140 151 Z" fill="#d2a494"/>
<path d="M134 84 C140 76 160 72 176 76 C182 80 184 86 184 90 C172 84 150 82 134 88 Z" fill="#bcb8b4" opacity=".75"/>
<rect x="131" y="102.5" width="24" height="20.5" rx="7" fill="none" stroke="#5c3428" stroke-width="2.2"/>
<rect x="158" y="102.5" width="26" height="20.5" rx="7" fill="none" stroke="#5c3428" stroke-width="2.2"/>
<ellipse cx="157" cy="141" rx="11" ry="6" fill="#c46a74"/>
<path d="M145 138 H169 L167 140 H147 Z" fill="#f0e8e8"/>
<path d="M128 92 C124 110 126 130 132 140 L124 136 C118 120 118 100 124 88 Z" fill="#30302a"/>
</g></svg><div class="lbl" style="left:4.5px;bottom:4px;background:rgba(36,36,36,.7);"><span class="lt">Sri Martini</span></div></div>
<div class="tile" style="left:947.7px;top:3px;border:1px solid #e2dfe6"><svg width="287" height="160" viewBox="0 0 287 160" preserveAspectRatio="none" style="left:0;top:0;width:100%;height:100%"><defs><linearGradient id="g4" x1="0" y1="0" x2="0.6" y2="1"><stop offset="0" stop-color="#eef2f7"/><stop offset=".5" stop-color="#ece8f0"/><stop offset="1" stop-color="#ecdeef"/></linearGradient>
<clipPath id="c4"><circle cx="142.7" cy="80.2" r="39.5"/></clipPath><filter id="b4" x="-20%" y="-20%" width="140%" height="140%"><feGaussianBlur stdDeviation=".8"/></filter>
<linearGradient id="sk4" x1="0" y1="0" x2="0" y2="1"><stop offset="0" stop-color="#3c9ce0"/><stop offset="1" stop-color="#a0d0f0"/></linearGradient>
<radialGradient id="wt4" cx=".45" cy=".4" r=".6"><stop offset="0" stop-color="#70d8cc"/><stop offset="1" stop-color="#28b8b0"/></radialGradient></defs>
<rect width="287" height="160" fill="url(#g4)"/>
<g clip-path="url(#c4)"><g filter="url(#b4)">
<rect x="100" y="38" width="90" height="20" fill="url(#sk4)"/>
<ellipse cx="150" cy="52" rx="15" ry="3" fill="#e8f0f4"/>
<path d="M100 56 C110 50 120 48 130 50 C140 52 150 49 160 51 C170 49 180 50 190 54 V78 H100 Z" fill="#4e7838"/>
<path d="M150 56 C160 52 175 52 186 56 L188 78 L150 78 Z" fill="#3c5244"/>
<path d="M118 60 L132 56 L138 76 L120 76 Z" fill="#3e5a40"/>
<rect x="100" y="74" width="90" height="40" fill="url(#wt4)"/>
<path d="M140 86 C152 84 162 92 156 100 C146 104 134 98 140 86 Z" fill="#90e0d4" opacity=".6"/>
<path d="M168.6 78 C178 74 184 80 184 92 L180 102 C172 100 166 90 168.6 78 Z" fill="#3a6a34"/>
<path d="M100 102 C106 94 114 90 122 96 C128 104 130 110 138 114 C150 110 160 112 170 106 L182 102 V125 H100 Z" fill="#5a8a34"/>
<path d="M106 96 C112 88 120 90 124 100 C120 108 112 110 106 104 Z" fill="#78a040"/>
</g></g></svg><div class="lbl" style="left:5px;bottom:5px;background:rgba(36,36,36,.6);"><span class="lt">94224001 Yogi Pramana</span><span class="ic"><svg class="mi" width="9" height="10" viewBox="0 0 9 10"><rect x="2.9" y="0.6" width="3.2" height="5.6" rx="1.6" fill="none" stroke="#fff" stroke-width=".9"/><path d="M1.3 4.6 A3.2 3.2 0 0 0 7.7 4.6 M4.5 7.8 V9.6" fill="none" stroke="#fff" stroke-width=".9"/><path d="M0.8 0.8 L8.2 9.2" stroke="#fff" stroke-width=".9"/></svg></span></div></div>
<div class="tile" style="left:81px;top:165.39999999999998px;"><svg width="287" height="160" viewBox="0 0 287 160" preserveAspectRatio="none" style="left:0;top:0;width:100%;height:100%"><defs><filter id="b5" x="-20%" y="-20%" width="140%" height="140%"><feGaussianBlur stdDeviation="1.4"/></filter><filter id="b5s" x="-20%" y="-20%" width="140%" height="140%"><feGaussianBlur stdDeviation="3"/></filter>
<radialGradient id="f5" cx=".45" cy=".35" r=".7"><stop offset="0" stop-color="#dcc4b6"/><stop offset=".6" stop-color="#d4b8a8"/><stop offset="1" stop-color="#c8aa9a"/></radialGradient>
<linearGradient id="l5" x1="0" y1="0" x2="0" y2="1"><stop offset="0" stop-color="#8466ee"/><stop offset=".3" stop-color="#7a5ae8"/><stop offset=".55" stop-color="#c4b0d8"/><stop offset="1" stop-color="#dcc4c4"/></linearGradient>
<linearGradient id="l5b" x1="0" y1="0" x2="0" y2="1"><stop offset="0" stop-color="#c8b8c8"/><stop offset=".2" stop-color="#a890d8"/><stop offset=".45" stop-color="#ccbcd0"/><stop offset="1" stop-color="#d8c4bc"/></linearGradient></defs>
<rect width="287" height="160" fill="#13161c"/>
<g filter="url(#b5s)">
<rect x="0" y="62" width="40" height="20" fill="#1e2a30"/>
<rect x="266" y="30" width="21" height="130" fill="#1c1e22"/>
</g>
<g filter="url(#b5)">
<ellipse cx="26" cy="42" rx="6" ry="4" fill="#5a5e66"/>
<rect x="0" y="80" width="38" height="57" fill="#b4c4c8"/>
<path d="M0 86 C10 90 18 100 8 120 L0 124 Z" fill="#8a9a90" opacity=".7"/>
<rect x="0" y="118" width="38" height="20" fill="#9aa8aa"/>
<rect x="268" y="95" width="19" height="8" fill="#b8c2ba"/>
<path d="M74 160 C74 120 80 60 120 25 C140 10 175 5 200 12 C230 30 255 60 264 100 L272 160 Z" fill="#bab2a6"/>
<path d="M196 40 C215 60 230 100 240 160 L252 160 C246 100 228 60 205 30 Z" fill="#aea596" opacity=".8"/>
<path d="M88 160 C88 120 100 60 143 33 C170 30 190 40 197 52 C208 70 212 110 208 160 Z" fill="url(#f5)"/>
<path d="M76 94 C74 80 86 74 104 76 C120 78 127 92 126 110 C124 126 110 130 96 128 C82 124 78 110 76 94 Z" fill="url(#l5b)" stroke="#e0d0c4" stroke-width="2"/>
<path d="M143 76 C145 68 168 66 192 70 C204 74 204 90 200 108 C194 122 170 128 154 124 C142 118 141 96 143 76 Z" fill="url(#l5)" stroke="#e0d0c4" stroke-width="2"/>
<ellipse cx="173" cy="93" rx="18" ry="5" fill="#5848c8" opacity=".55"/>
<ellipse cx="110" cy="95" rx="12" ry="4" fill="#6858c0" opacity=".45"/>
<ellipse cx="71" cy="108" rx="4" ry="8" fill="#e6e6ea"/>
</g></svg><div class="lbl" style="left:6px;bottom:6px;background:rgba(36,36,36,.62);"><span class="lt">Erna yuliwati-UMPalembang</span><span class="ic"><svg class="mi" width="10" height="10" viewBox="0 0 10 10"><circle cx="3.2" cy="2.2" r="1.5" fill="#fff"/><circle cx="6.6" cy="2.8" r="1.2" fill="#fff"/><path d="M0.8 5.8 A1 1 0 0 1 1.8 4.6 H5 V8.6 H2.4 A1.6 1.6 0 0 1 0.8 7 Z" fill="#fff"/><circle cx="7" cy="7" r="2.8" fill="#fff"/><text x="5.6" y="9" font-size="4.6" font-family="Liberation Sans" font-weight="bold" fill="#444">?</text></svg></span><span class="ic"><svg class="mi" width="9" height="10" viewBox="0 0 9 10"><rect x="2.9" y="0.6" width="3.2" height="5.6" rx="1.6" fill="none" stroke="#fff" stroke-width=".9"/><path d="M1.3 4.6 A3.2 3.2 0 0 0 7.7 4.6 M4.5 7.8 V9.6" fill="none" stroke="#fff" stroke-width=".9"/><path d="M0.8 0.8 L8.2 9.2" stroke="#fff" stroke-width=".9"/></svg></span></div></div>
<div class="tile" style="left:369.9px;top:165.39999999999998px;"><svg width="287" height="160" viewBox="0 0 287 160" preserveAspectRatio="none" style="left:0;top:0;width:100%;height:100%"><defs><filter id="b6" x="-20%" y="-20%" width="140%" height="140%"><feGaussianBlur stdDeviation="1"/></filter><filter id="b6s" x="-20%" y="-20%" width="140%" height="140%"><feGaussianBlur stdDeviation="2.5"/></filter>
<linearGradient id="g6" x1="0" y1="0" x2="0" y2="1"><stop offset="0" stop-color="#aec8b0"/><stop offset=".12" stop-color="#b0c8ae"/><stop offset=".18" stop-color="#b6c2a2"/><stop offset=".24" stop-color="#b8c2a0"/><stop offset=".3" stop-color="#a8bca4"/><stop offset="1" stop-color="#a6c2a6"/></linearGradient>
<radialGradient id="fy6" cx=".5" cy=".5" r=".6"><stop offset="0" stop-color="#d8ae9e"/><stop offset="1" stop-color="#c09484"/></radialGradient></defs>
<rect width="287" height="160" fill="url(#g6)"/>
<g filter="url(#b6s)">
<path d="M0 29 L42 0 H30 L0 18 Z" fill="#d4e4d4" opacity=".8"/>
<rect x="0" y="39" width="287" height="4" fill="#9cb29c" opacity=".6"/>
<rect x="36" y="48" width="34" height="24" fill="#a0b89e" opacity=".6"/>
<rect x="215" y="48" width="40" height="24" fill="#a0b89e" opacity=".6"/>
<ellipse cx="200" cy="96" rx="80" ry="8" fill="#c0d4bc" opacity=".5"/>
</g>
<g filter="url(#b6)">
<circle cx="143.3" cy="20" r="24" fill="#145a12"/>
<circle cx="143.3" cy="20" r="20.5" fill="none" stroke="#4a9a28" stroke-width=".9"/>
<circle cx="143.3" cy="20" r="17" fill="#1a6214"/>
<circle cx="143.3" cy="20" r="13.5" fill="none" stroke="#78b43a" stroke-width="1.1" stroke-dasharray="1.5 1.8"/>
<circle cx="143.3" cy="20" r="9" fill="#226e18" stroke="#6aa834" stroke-width=".8"/>
<circle cx="143.3" cy="20" r="4" fill="#4c8c2a"/>
<rect x="11.6" y="74" width="263.4" height="17.6" rx="8.8" fill="#f2e81c"/>
</g>
<g font-family="Liberation Sans" font-weight="bold">
<text x="63.8" y="67" font-size="20.5" textLength="46.5" lengthAdjust="spacingAndGlyphs" fill="#0e2e10" stroke="#d8ecd0" stroke-width="2.4" stroke-linejoin="round">PELA</text><text x="63.8" y="67" font-size="20.5" textLength="46.5" lengthAdjust="spacingAndGlyphs" fill="#0e2e10" stroke="#0e2e10" stroke-width="1.2" stroke-linejoin="round">PELA</text>
<text x="170" y="67" font-size="20.5" textLength="52.7" lengthAdjust="spacingAndGlyphs" fill="#0e2e10" stroke="#d8ecd0" stroke-width="2.4" stroke-linejoin="round">AAN</text><text x="170" y="67" font-size="20.5" textLength="52.7" lengthAdjust="spacingAndGlyphs" fill="#0e2e10" stroke="#0e2e10" stroke-width="1.2" stroke-linejoin="round">AAN</text>
<text x="24.3" y="87" font-size="10.2" textLength="64.3" lengthAdjust="spacingAndGlyphs" fill="#1e2410" stroke="#1e2410" stroke-width=".4">SEMINAR PRO</text>
<text x="191.5" y="87" font-size="10.2" textLength="71.8" lengthAdjust="spacingAndGlyphs" fill="#1e2410" stroke="#1e2410" stroke-width=".4">GIL/UJIAN TESIS</text>
<text x="40" y="116.2" font-size="9.4" textLength="44.4" lengthAdjust="spacingAndGlyphs" fill="#1e4420" stroke="#1e4420" stroke-width=".35">PROGRAM S</text>
<text x="200" y="116.2" font-size="9.4" textLength="47.5" lengthAdjust="spacingAndGlyphs" fill="#1e4420" stroke="#1e4420" stroke-width=".35">M MAGISTER</text>
<text x="58.6" y="139.6" font-size="9.4" textLength="22.7" lengthAdjust="spacingAndGlyphs" fill="#1e4420" stroke="#1e4420" stroke-width=".35">UNIV</text>
<text x="201.6" y="139.6" font-size="9.4" textLength="27" lengthAdjust="spacingAndGlyphs" fill="#1e4420" stroke="#1e4420" stroke-width=".35">MBANG</text>
</g>
<g filter="url(#b6)">
<path d="M81 160 V108 C81 70 108 45 141 45 C176 45 200 72 200 105 V143 C212 150 220 155 224 160 Z" fill="#1c1c1c"/>
<path d="M93 115 C93 82 112 60 138 60 C166 60 184 82 184 112 C184 138 172 153 150 154 H120 C100 150 93 136 93 115 Z" fill="url(#fy6)"/>
<path d="M30 160 C50 156 70 155 90 156 H230 V160 Z" fill="#1c1c1c"/>
<rect x="94" y="90" width="39" height="26" rx="12" fill="#d0b4a8" stroke="#302a26" stroke-width="3"/>
<rect x="144.5" y="91" width="39" height="25" rx="12" fill="#d8c4bc" stroke="#302a26" stroke-width="3"/>
<path d="M133 100 C137 97 141 97 144.5 100" stroke="#302a26" stroke-width="2.5" fill="none"/>
<path d="M124 128 C134 134 150 134 160 128 L158 136 C148 142 134 140 126 134 Z" fill="#f0e6e0"/>
<path d="M126 134 C136 142 150 142 158 136 L154 144 C146 148 134 146 128 140 Z" fill="#b05858"/>
</g></svg><div class="lbl" style="left:6px;bottom:6px;background:rgba(36,36,36,.62);"><span class="lt">94224004 Yeni Novita Sari</span><span class="ic"><svg class="mi" width="9" height="10" viewBox="0 0 9 10"><rect x="2.9" y="0.6" width="3.2" height="5.6" rx="1.6" fill="none" stroke="#fff" stroke-width=".9"/><path d="M1.3 4.6 A3.2 3.2 0 0 0 7.7 4.6 M4.5 7.8 V9.6" fill="none" stroke="#fff" stroke-width=".9"/><path d="M0.8 0.8 L8.2 9.2" stroke="#fff" stroke-width=".9"/></svg></span></div></div>
<div class="tile" style="left:658.8px;top:165.39999999999998px;border:1px solid #e3dfe5"><svg width="287" height="160" viewBox="0 0 287 160" preserveAspectRatio="none" style="left:0;top:0;width:100%;height:100%"><defs><linearGradient id="g7" x1="0" y1="0" x2="0.5" y2="1"><stop offset="0" stop-color="#eeecf0"/><stop offset=".55" stop-color="#efe8ec"/><stop offset="1" stop-color="#ece6f0"/></linearGradient>
<clipPath id="c7"><circle cx="142.6" cy="79.7" r="39.7"/></clipPath><filter id="b7" x="-20%" y="-20%" width="140%" height="140%"><feGaussianBlur stdDeviation=".6"/></filter></defs>
<rect width="287" height="160" fill="url(#g7)"/>
<g clip-path="url(#c7)"><g filter="url(#b7)">
<rect x="100" y="38" width="90" height="90" fill="#bf1c12"/>
<path d="M106 125 V104 C108 94 118 88 134 84 H152 C168 88 178 94 180 104 V125 Z" fill="#f2f0f2"/>
<path d="M132.8 76 H153 L150 87 H136 Z" fill="#e8e4e6"/>
<ellipse cx="128" cy="62" rx="2" ry="4" fill="#c89c8c"/><ellipse cx="157" cy="62" rx="2" ry="4" fill="#c89c8c"/>
<path d="M129.3 58 C129.3 50 135 46 143 46 C151 46 156.6 50 156.6 58 V66 C156.6 74 150 78.5 143 78.5 C136 78.5 129.3 74 129.3 66 Z" fill="#d4ac9c"/>
<path d="M127.5 60 C126 46 133 40.5 143 40.5 C153 40.5 158.5 46 157.2 60 C155 52 150 49 143 49 C136 49 131 52 127.5 60 Z" fill="#1c1818"/>
<path d="M138.5 85 H147.5 L149 90 L147.7 119 H138.2 L137 90 Z" fill="#18181c"/>
</g></g></svg><div class="lbl" style="left:5px;bottom:5px;background:rgba(36,36,36,.6);"><span class="lt">94224007 M. Julian Saputra Jaya</span><span class="ic"><svg class="mi" width="9" height="10" viewBox="0 0 9 10"><rect x="2.9" y="0.6" width="3.2" height="5.6" rx="1.6" fill="none" stroke="#fff" stroke-width=".9"/><path d="M1.3 4.6 A3.2 3.2 0 0 0 7.7 4.6 M4.5 7.8 V9.6" fill="none" stroke="#fff" stroke-width=".9"/><path d="M0.8 0.8 L8.2 9.2" stroke="#fff" stroke-width=".9"/></svg></span></div></div>
<div class="tile" style="left:947.7px;top:165.39999999999998px;"><svg width="287" height="160" viewBox="0 0 287 160" preserveAspectRatio="none" style="left:0;top:0;width:100%;height:100%"><defs><filter id="b8" x="-20%" y="-20%" width="140%" height="140%"><feGaussianBlur stdDeviation=".8"/></filter>
<linearGradient id="bm8" x1="0" y1="0" x2="0" y2="1"><stop offset="0" stop-color="#dcbca0"/><stop offset=".75" stop-color="#d2ae90"/><stop offset="1" stop-color="#b8957a"/></linearGradient></defs>
<rect width="287" height="160" fill="#dbd7d0"/>
<g filter="url(#b8)">
<rect x="0" y="0" width="42" height="160" fill="#d8d4cc"/>
<rect x="39" y="27" width="104" height="32" fill="#d2cbc2"/>
<rect x="39" y="58" width="104" height="1.5" fill="#bcb4aa"/>
<rect x="42" y="60" width="125" height="78" fill="#dad6ce"/>
<rect x="143" y="39" width="52" height="99" fill="#d6d2ca"/>
<g stroke="#c4beb4" stroke-width="1.2" opacity=".7"><path d="M150 40 V137 M158 40 V137 M166 40 V137 M174 40 V137 M182 40 V137 M190 40 V137"/></g><rect x="143" y="60" width="24.4" height="78" fill="#dcd8d0"/>

<rect x="196" y="59" width="32" height="72" fill="#e0dcd6"/>
<rect x="228" y="30" width="59" height="105" fill="#ebebea"/>
<rect x="239.5" y="48" width="4.5" height="85" fill="#d4c2b0"/>
<rect x="260" y="36" width="4.5" height="102" fill="#d4c2b0"/>
<path d="M226 59.5 L287 30 V36 L228 64 Z" fill="#d6c4b2"/>
<rect x="0" y="0" width="287" height="11" fill="url(#bm8)"/>
<rect x="15.8" y="11" width="271.2" height="8.5" fill="url(#bm8)"/>
<rect x="28.5" y="20" width="258.5" height="7.4" fill="url(#bm8)"/>
<rect x="143" y="28" width="144" height="6" fill="url(#bm8)"/>
<rect x="143" y="35" width="140" height="4.5" fill="url(#bm8)"/>
<path d="M195 40 H272 L264 44 H195 Z" fill="#c8a284"/>
<path d="M195 45 H262 L254 49 H195 Z" fill="#c4a080"/>
<path d="M195 50 H250 L244 53.5 H195 Z" fill="#c8a486"/>
<path d="M195 54.5 H240 L234 58.5 H195 Z" fill="#c4a082"/>
<ellipse cx="45" cy="101" rx="5.5" ry="5" fill="#d8d4ce" stroke="#a8a49e" stroke-width=".8"/>
<rect x="44.5" y="101" width="1" height="38" fill="#a8a49e"/>
<rect x="0" y="137.5" width="287" height="22.5" fill="#e4e2dc"/>
<path d="M167 128 H287 V160 H150 Z" fill="#e8dfd4"/>
<path d="M175 137 L287 142 V146 L180 141 Z" fill="#d2c6b8"/>
<path d="M160 150 L287 156 V160 H160 Z" fill="#d4c8ba"/>
<rect x="55" y="114" width="24" height="19" fill="#d8b098"/>
<path d="M56 133 H90 V143 M60 133 V143 M80 126 V143" stroke="#c09a7c" stroke-width="1.5" fill="none"/>
<rect x="202.5" y="110.8" width="32" height="3" fill="#c89c78"/>
<path d="M205 113 V133 M212 113 V132 M222 113 V133 M232 113 V133 M212 123 H232" stroke="#c49a76" stroke-width="2" fill="none"/>
<ellipse cx="208" cy="82" rx="6" ry="4" fill="#d8d4ce"/>
</g></svg><div class="lbl" style="left:6px;bottom:6px;background:rgba(36,36,36,.62);"><span class="lt">Marhaini</span><span class="ic"><svg class="mi" width="10" height="10" viewBox="0 0 10 10"><circle cx="3.2" cy="2.2" r="1.5" fill="#fff"/><circle cx="6.6" cy="2.8" r="1.2" fill="#fff"/><path d="M0.8 5.8 A1 1 0 0 1 1.8 4.6 H5 V8.6 H2.4 A1.6 1.6 0 0 1 0.8 7 Z" fill="#fff"/><circle cx="7" cy="7" r="2.8" fill="#fff"/><text x="5.6" y="9" font-size="4.6" font-family="Liberation Sans" font-weight="bold" fill="#444">?</text></svg></span><span class="ic"><svg class="mi" width="9" height="10" viewBox="0 0 9 10"><rect x="2.9" y="0.6" width="3.2" height="5.6" rx="1.6" fill="none" stroke="#fff" stroke-width=".9"/><path d="M1.3 4.6 A3.2 3.2 0 0 0 7.7 4.6 M4.5 7.8 V9.6" fill="none" stroke="#fff" stroke-width=".9"/><path d="M0.8 0.8 L8.2 9.2" stroke="#fff" stroke-width=".9"/></svg></span></div></div>
<div class="tile" style="left:514.4px;top:327.79999999999995px;"><svg width="287" height="160" viewBox="0 0 287 160" preserveAspectRatio="none" style="left:0;top:0;width:100%;height:100%"><defs><filter id="b9" x="-20%" y="-20%" width="140%" height="140%"><feGaussianBlur stdDeviation=".9"/></filter>
<linearGradient id="sk9" x1="0" y1="0" x2="0" y2="1"><stop offset="0" stop-color="#b4cce6"/><stop offset=".6" stop-color="#c8d8ea"/><stop offset="1" stop-color="#dcdce0"/></linearGradient>
<linearGradient id="wl9" x1="0" y1="0" x2="1" y2="0"><stop offset="0" stop-color="#dc9c88"/><stop offset="1" stop-color="#d48e78"/></linearGradient>
<linearGradient id="ar9" x1="0" y1="0" x2="1" y2="1"><stop offset="0" stop-color="#a4604e"/><stop offset=".5" stop-color="#b06c5a"/><stop offset="1" stop-color="#b87664"/></linearGradient></defs>
<rect width="287" height="160" fill="url(#wl9)"/>
<g filter="url(#b9)">
<path d="M51.7 135 V92 C51.7 42 92 5.8 140 5.8 C188 5.8 224 42 226 92 V135 Z" fill="#e2a28c"/>
<path d="M51.7 135 V92 C51.7 42 92 5.8 140 5.8 C160 5.8 172 10 180 16 C172 20 165 24 156 25 C122 27 99 52 99 88 V135 Z" fill="url(#ar9)"/>
<path d="M51.7 135 V92 C51.7 42 92 5.8 140 5.8 C175 5.8 205 25 218 55" fill="none" stroke="#9a5040" stroke-width="1.8"/>
<path d="M99 160 V88 C99 52 120 27 156 25 C190 27 214 52 215 88 V160 Z" fill="url(#sk9)"/>
<path d="M99 70 C112 67 125 69 138 62 C150 59 166 63 180 67 C195 66 205 69 215 71 V160 H99 Z" fill="#e6d8c4"/>
<path d="M160 84 C180 82 200 90 215 96 V104 C195 100 175 96 160 90 Z" fill="#cfc0b4" opacity=".7"/><path d="M99 76 C115 74 128 78 140 82 L125 86 C115 84 105 84 99 86 Z" fill="#d8c8b4" opacity=".7"/>
<path d="M0 125 H287 V160 H0 Z" fill="#d2ae8c"/>
<path d="M99 108 C130 106 180 106 217 112 V135 H99 Z" fill="#dcc4a4"/>
<path d="M55 125 V135 H99 V125 Z" fill="#a46858"/>
<rect x="259.5" y="0" width="27.5" height="150" fill="#e8d8c2"/>
<g stroke="#cbb49c" stroke-width="1.3"><path d="M263 0 V150 M268 0 V150 M273 0 V150 M278 0 V150 M283 0 V150"/></g>
<rect x="247" y="43" width="12" height="6" fill="#a8604e" opacity=".8"/><rect x="247" y="58" width="12" height="6" fill="#a8604e" opacity=".8"/><rect x="247" y="72" width="12" height="6" fill="#a8604e" opacity=".8"/>
<circle cx="244.5" cy="45.7" r="3.8" fill="#f6f2ee"/><circle cx="244.5" cy="60.6" r="3.8" fill="#f6f2ee"/><circle cx="244.5" cy="75" r="3.8" fill="#f6f2ee"/>
<path d="M0 115 L18 118 V154 H0 Z" fill="#a69690"/>
<path d="M0 122 H18 M0 130 H18 M0 138 H18" stroke="#8e7e78" stroke-width="1"/>
<ellipse cx="22" cy="96" rx="7" ry="12" fill="#e8c4c4" opacity=".45"/>
<rect x="18" y="110.6" width="8.4" height="19" rx="4" fill="#2a5a60"/>
<rect x="204" y="110.8" width="20.3" height="9.6" rx="4.8" fill="#2c8290"/>
<rect x="209" y="120" width="8.4" height="28" fill="#ece4d6"/>
<rect x="217.4" y="125" width="20.2" height="4.4" fill="#2a5a64"/>
<rect x="222" y="129" width="8" height="18" fill="#b09a88"/>
<rect x="228" y="112.4" width="59" height="5.3" fill="#e8dcc8"/>
<rect x="235.5" y="117.7" width="17" height="31" fill="#dccab2"/>
<rect x="261" y="117.7" width="11.6" height="31" fill="#e4d4c0"/>
<path d="M104 160 C104 150 108 140 110 130 C110 112 118 104.3 130 104.3 C143 104.3 151 112 151 128 C153 140 156 150 156 160 Z" fill="#2e2624"/>
<path d="M112 160 V128 C112 114 120 106 130.5 106 C141 106 149 114 149 128 V160 Z" fill="#b48a78"/>
<ellipse cx="131" cy="114" rx="11" ry="7" fill="#d2ae98"/>
<path d="M112 141 H129 V149 H112 Z M133 141 H150 V149 H133 Z" fill="none" stroke="#2a1e1e" stroke-width="1.8"/>
<path d="M135 160 L140 154 H160 V160 Z" fill="#505a5c"/>
</g></svg><div class="lbl" style="left:6px;bottom:6px;background:rgba(36,36,36,.62);"><span class="lt">Eko Ariyanto</span><span class="ic"><svg class="mi" width="10" height="10" viewBox="0 0 10 10"><circle cx="3.2" cy="2.2" r="1.5" fill="#fff"/><circle cx="6.6" cy="2.8" r="1.2" fill="#fff"/><path d="M0.8 5.8 A1 1 0 0 1 1.8 4.6 H5 V8.6 H2.4 A1.6 1.6 0 0 1 0.8 7 Z" fill="#fff"/><circle cx="7" cy="7" r="2.8" fill="#fff"/><text x="5.6" y="9" font-size="4.6" font-family="Liberation Sans" font-weight="bold" fill="#444">?</text></svg></span><span class="ic"><svg class="mi" width="9" height="10" viewBox="0 0 9 10"><rect x="2.9" y="0.6" width="3.2" height="5.6" rx="1.6" fill="none" stroke="#fff" stroke-width=".9"/><path d="M1.3 4.6 A3.2 3.2 0 0 0 7.7 4.6 M4.5 7.8 V9.6" fill="none" stroke="#fff" stroke-width=".9"/><path d="M0.8 0.8 L8.2 9.2" stroke="#fff" stroke-width=".9"/></svg></span><span class="ic"><svg class="mi" width="9" height="3" viewBox="0 0 9 3" style="margin-bottom:3px"><circle cx="1" cy="1.5" r=".9" fill="#fff"/><circle cx="4.5" cy="1.5" r=".9" fill="#fff"/><circle cx="8" cy="1.5" r=".9" fill="#fff"/></svg></span></div></div>
<svg style="left:635px;top:497px" width="6" height="10" viewBox="0 0 6 10"><path d="M5 0.8 L1 5 L5 9.2" fill="none" stroke="#bdbdbd" stroke-width="1"/></svg>
<div class="abs" style="left:650px;top:495px;font-size:10.5px;color:#242424">1/2</div>
<svg style="left:675px;top:497px" width="6" height="10" viewBox="0 0 6 10"><path d="M1 0.8 L5 5 L1 9.2" fill="none" stroke="#424242" stroke-width="1.1"/></svg>
</div>
<div id="taskbar" class="abs">
 <svg style="left:551px;top:11px" width="24" height="24" viewBox="0 0 24 24"><defs><linearGradient id="win" x1="0" y1="0" x2="1" y2="1"><stop offset="0" stop-color="#4fc3f7"/><stop offset="1" stop-color="#0a6fd1"/></linearGradient></defs><rect x="0" y="0" width="11.4" height="11.4" rx="1" fill="url(#win)"/><rect x="12.6" y="0" width="11.4" height="11.4" rx="1" fill="url(#win)"/><rect x="0" y="12.6" width="11.4" height="11.4" rx="1" fill="url(#win)"/><rect x="12.6" y="12.6" width="11.4" height="11.4" rx="1" fill="url(#win)"/></svg>
 <svg style="left:596px;top:12px" width="25" height="22" viewBox="0 0 25 22"><path d="M0.5 2 A1.5 1.5 0 0 1 2 0.5 H9 L11.5 3 H23 A1.5 1.5 0 0 1 24.5 4.5 V20.5 A1.5 1.5 0 0 1 23 22 H2 A1.5 1.5 0 0 1 0.5 20.5 Z" fill="#e8a317"/><path d="M0.5 5 H24.5 V20.5 A1.5 1.5 0 0 1 23 22 H2 A1.5 1.5 0 0 1 0.5 20.5 Z" fill="#ffc83d"/><rect x="5" y="15" width="15" height="7" rx="1" fill="#1d73c9"/></svg>
 <div class="abs" style="left:606px;top:38px;width:4px;height:3px;border-radius:2px;background:#8a8a8a"></div>
 <svg style="left:640px;top:11px" width="24" height="24" viewBox="0 0 24 24"><defs><linearGradient id="edg" x1="0" y1="0" x2="0" y2="1"><stop offset="0" stop-color="#2aa8e8"/><stop offset=".6" stop-color="#1274cc"/><stop offset="1" stop-color="#0a4c9a"/></linearGradient><linearGradient id="edg2" x1="0" y1="0" x2="1" y2="0.4"><stop offset="0" stop-color="#35b8e8"/><stop offset=".6" stop-color="#52d07a"/><stop offset="1" stop-color="#8adc5c"/></linearGradient></defs><circle cx="12" cy="12" r="11.6" fill="url(#edg)"/><path d="M1.5 8.5 C3.5 2.5 9 0.4 13 0.5 C19 0.8 23.6 5 23.6 11 C23.6 15 20.5 17 17 17 C14 17 11.5 16 10.5 14.5 C12.5 14.8 15 14 15.2 11.8 C15.4 9 12.5 7 9.5 7 C6 7 3 8 1.5 8.5 Z" fill="url(#edg2)"/><ellipse cx="12.2" cy="13.2" rx="2.8" ry="2.2" fill="#e8f4fa"/><path d="M4 17 C6 21 10 23 14 22.5 C9 21 7 17 8 13 C6 14 4.6 15.5 4 17 Z" fill="#0d5aa8" opacity=".8"/></svg>
 <svg style="left:684px;top:11px" width="24" height="24" viewBox="0 0 24 24"><rect x="0" y="0" width="24" height="24" fill="#1a8fd6"/><path d="M6 9 V5 H14 V9 M4 9 H16 M4 9 V17 H7 M16 9 V11" fill="none" stroke="#fff" stroke-width="1.1"/><rect x="8" y="12" width="7" height="8" fill="none" stroke="#fff" stroke-width="1.1"/><rect x="16" y="11" width="5" height="10" rx="1" fill="none" stroke="#fff" stroke-width="1.1"/><path d="M10 15 H13 M10 17 H13" stroke="#fff" stroke-width=".9"/></svg>
 <div class="abs" style="left:721px;top:4px;width:38px;height:38px;border-radius:5px;background:#f7f7f7;border:1px solid #e8e8e8"></div>
 <svg style="left:728px;top:11px" width="24" height="24" viewBox="0 0 24 24"><circle cx="12" cy="12" r="11.5" fill="#db4437"/><path d="M12 12 L22 6.2 A11.5 11.5 0 0 1 13 23.5 Z" fill="#fcc934"/><path d="M12 12 L13 23.5 A11.5 11.5 0 0 1 1.8 6.5 Z" fill="#1e9e4a"/><path d="M12 6.5 H22.5 A11.5 11.5 0 0 0 1.8 6.5 L6.8 15 A6 6 0 0 1 12 6.5 Z" fill="#db4437"/><circle cx="12" cy="12" r="5.6" fill="#fff"/><circle cx="12" cy="12" r="4.4" fill="#3f7ee8"/></svg>
 <div class="abs" style="left:731px;top:38px;width:17px;height:3px;border-radius:2px;background:#1e5fa8"></div>
 <svg style="left:772px;top:12px" width="24" height="22" viewBox="0 0 24 22"><rect x="7" y="0.5" width="16.5" height="21" rx="1" fill="#fff" stroke="#2b579a" stroke-width="1"/><path d="M11 5 H21 M11 8 H21 M11 11 H21 M11 14 H21 M11 17 H21" stroke="#2b579a" stroke-width="1"/><rect x="0" y="3" width="14" height="16" rx="1" fill="#2b579a"/><text x="7" y="15" text-anchor="middle" font-family="Liberation Sans" font-weight="bold" font-size="10" fill="#fff">W</text></svg>
 <div class="abs" style="left:781px;top:38px;width:4px;height:3px;border-radius:2px;background:#8a8a8a"></div>
 <svg style="left:1131px;top:19px" width="12" height="8" viewBox="0 0 12 8"><path d="M1 7 L6 1.5 L11 7" fill="none" stroke="#242424" stroke-width="1.3"/></svg>
 <svg style="left:1160px;top:15px" width="18" height="17" viewBox="0 0 18 17"><path d="M2 8 A6.5 6.5 0 0 1 13.5 3.5 M14.5 9 A6.5 6.5 0 0 1 3 13.5" fill="none" stroke="#242424" stroke-width="1.2"/><path d="M11 0.8 L14.2 3.4 L11 4.8 M5.6 11.5 L2.6 13.6 L5.8 15.8" fill="none" stroke="#242424" stroke-width="1.1"/><circle cx="12.5" cy="12.5" r="3.4" fill="#f7a21b"/></svg>
 <svg style="left:1192px;top:16px" width="18" height="14" viewBox="0 0 18 14"><path d="M4.5 12 A3.5 3.5 0 0 1 4 5 A5.5 5.5 0 0 1 14 5.5 A3.3 3.3 0 0 1 14 12 Z" fill="#cfcfcf" stroke="#242424" stroke-width="1.1"/><path d="M1.5 0.8 L16 13.5" stroke="#242424" stroke-width="1.2"/></svg>
 <svg style="left:1225px;top:15px" width="17" height="17" viewBox="0 0 17 17"><rect x="0.6" y="2" width="11" height="9.5" fill="none" stroke="#242424" stroke-width="1.1"/><path d="M4 14.5 H9 M6.3 11.5 V14.5" stroke="#242424" stroke-width="1.1"/><rect x="12.2" y="0.6" width="3.6" height="5" rx="1.5" fill="#fff" stroke="#242424" stroke-width="1"/><path d="M14 5.6 V15.5 H11" fill="none" stroke="#242424" stroke-width="1"/></svg>
 <svg style="left:1250px;top:15px" width="16" height="17" viewBox="0 0 16 17"><path d="M1 5.5 H3.5 L7 2.5 V12.5 L3.5 9.5 H1 Z" fill="none" stroke="#242424" stroke-width="1.1" stroke-linejoin="round"/><circle cx="11" cy="11.5" r="4.2" fill="#242424"/><path d="M9.3 9.8 L12.7 13.2 M12.7 9.8 L9.3 13.2" stroke="#fff" stroke-width="1.1"/></svg>
 <div class="abs" style="left:1266px;top:8px;width:71px;text-align:right;font-size:12px;line-height:16px;color:#1a1a1a">10:39 AM<br><span style="letter-spacing:.2px">2/14/2026</span></div>
</div>
</body></html>
